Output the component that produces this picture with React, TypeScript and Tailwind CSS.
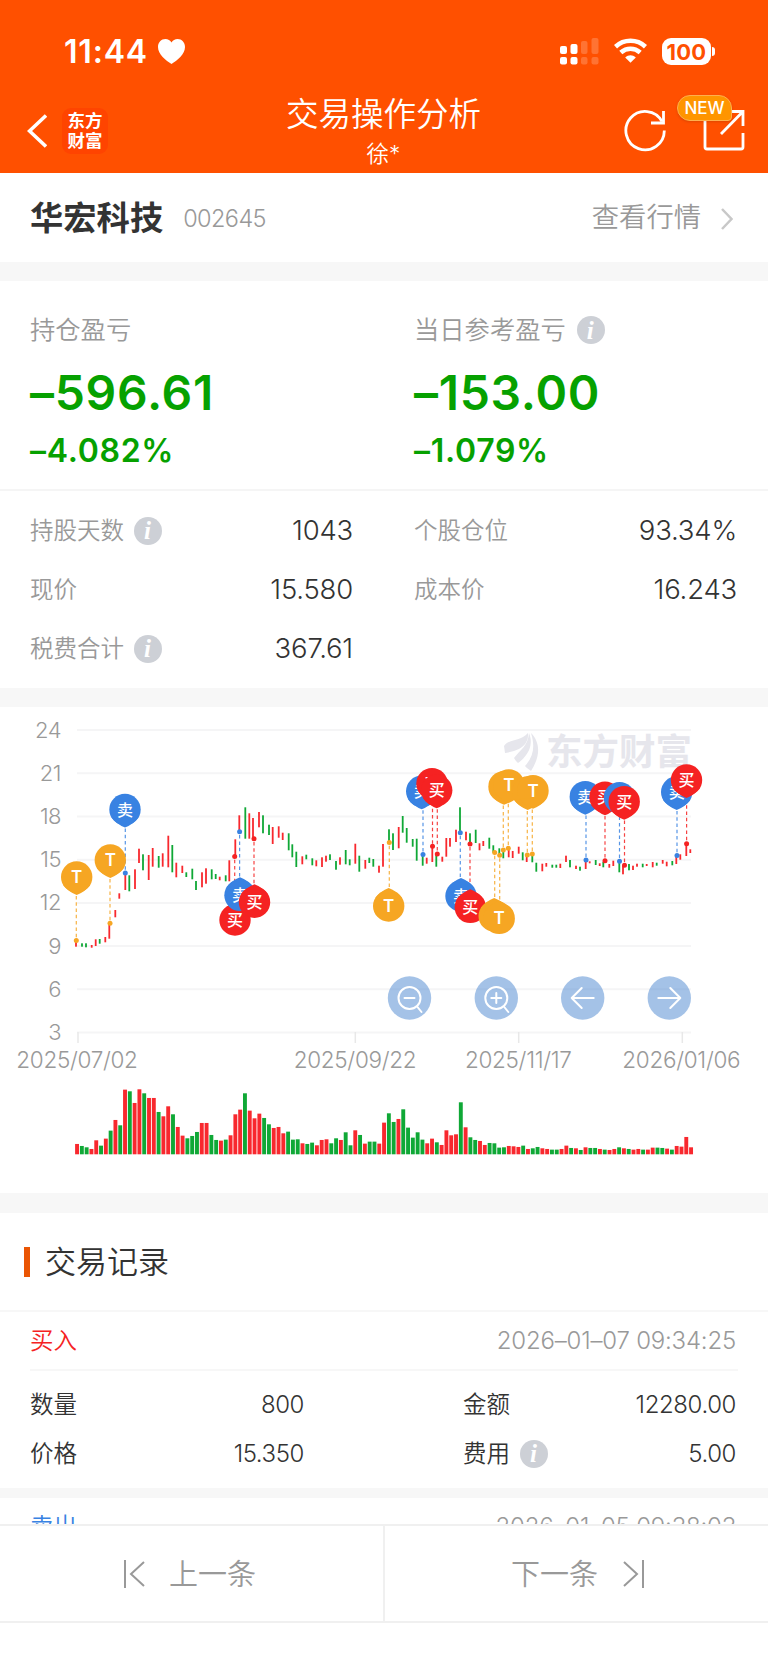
import type { ReactNode } from 'react'

type Candle = [string, number, number, number]

// [color, x, high, low]
const CANDLES: Candle[] = [
  ['r', 76, 941.7, 946.7], ['g', 82, 943.3, 946.7], ['g', 86, 943.3, 947.3], ['r', 91.7, 945, 947.7], ['r', 95.7, 939.3, 946],
  ['g', 99.7, 939, 943.7], ['r', 105.3, 937, 942.3], ['r', 109.3, 923.3, 938.7], ['r', 115.3, 910, 917.3], ['r', 119.3, 893.3, 898.7],
  ['r', 125.3, 873.3, 890], ['g', 129.3, 875.3, 891.3], ['r', 135, 869.3, 889], ['r', 139, 848.7, 863], ['g', 143, 854.3, 870.3],
  ['r', 148.7, 855, 880], ['r', 152.7, 848, 866.7], ['g', 158.7, 856, 867.7], ['r', 162.7, 853.3, 866.7], ['r', 168.3, 835.7, 867.3],
  ['g', 172.3, 845, 872.3], ['r', 176.3, 862.7, 877.3], ['r', 182.3, 865.7, 873], ['g', 186.3, 872.3, 877], ['g', 192.3, 868.7, 879.3],
  ['g', 196, 881, 890], ['r', 202, 872.3, 887.3], ['r', 206, 868.3, 883.7], ['g', 211.7, 869.3, 879.3], ['g', 215.7, 874, 879],
  ['r', 219.7, 876.7, 880.3], ['g', 225.7, 875.3, 881.3], ['r', 229.3, 860.3, 881.3], ['r', 235.3, 839.3, 856.7], ['r', 239.3, 815.3, 831.7],
  ['g', 245.3, 807.3, 838.7], ['r', 249.3, 813.3, 838.7], ['r', 253, 818, 838.7], ['r', 259, 812, 827.3], ['g', 263, 815.3, 833.3],
  ['g', 269, 824.7, 835], ['r', 272.7, 827, 844], ['r', 278.7, 826.3, 837.7], ['r', 282.7, 832.7, 840], ['g', 288.7, 833.3, 850.3],
  ['g', 292.3, 844.3, 857.3], ['g', 296.3, 851.7, 867], ['r', 302.3, 856.3, 864.3], ['g', 306.3, 854.7, 859.3], ['g', 312.3, 858.3, 865.3],
  ['r', 316.3, 860.3, 866.3], ['r', 322, 857.3, 867], ['r', 326, 855.7, 861.7], ['g', 330, 854.3, 860], ['g', 336, 861, 869.7],
  ['r', 340, 857.3, 864.7], ['g', 345.7, 850, 864.3], ['g', 349.7, 859.3, 865.3], ['r', 355.3, 843.7, 863.7], ['g', 359.3, 855.7, 871.7],
  ['r', 365.3, 860, 868.7], ['g', 369.3, 857.7, 863], ['g', 373.3, 859, 866.7], ['r', 379, 865.7, 872.7], ['r', 383, 844, 866.7],
  ['g', 389, 829.3, 842.7], ['g', 393, 833.3, 850], ['r', 398.7, 827, 848.3], ['g', 402.7, 816, 832.7], ['g', 406.7, 828, 842.7],
  ['g', 412.7, 839, 846.7], ['g', 416.7, 838.7, 860.7], ['g', 422.7, 854.7, 865.7], ['r', 426.7, 857.7, 863.7], ['r', 432.3, 846.3, 862],
  ['g', 436.3, 854, 866.7], ['r', 442.3, 856.7, 861.7], ['r', 446.3, 838, 856.7], ['r', 450, 838, 846.7], ['r', 456, 829.7, 842],
  ['g', 460, 807.3, 832.7], ['r', 466, 831.7, 840.3], ['g', 470, 833.3, 844], ['g', 475.7, 829.7, 843], ['r', 479.5, 843.3, 850.3],
  ['r', 483.3, 841, 846], ['g', 489.3, 837.7, 848.7], ['g', 493.3, 845.3, 852.7], ['g', 499.3, 848.3, 855], ['g', 503.3, 850, 858.3],
  ['r', 508.7, 848.3, 857.3], ['r', 512.7, 851, 858], ['r', 518.7, 846.7, 853.7], ['g', 522.7, 852.3, 860.3], ['r', 526.7, 855, 862],
  ['g', 532.3, 854.3, 862.3], ['g', 536.3, 862.7, 871.7], ['r', 542.3, 863.7, 871.3], ['r', 546.3, 863, 866.7], ['g', 552.3, 864.7, 867.7],
  ['g', 556.3, 864.7, 867.7], ['r', 560.3, 863.7, 868], ['r', 566, 855.7, 862], ['g', 570, 860, 867.3], ['r', 576, 865.7, 869],
  ['g', 580, 866.7, 870.7], ['r', 585.7, 860, 869], ['r', 589.7, 861.3, 863.3], ['g', 595.7, 860, 865], ['r', 599.7, 863.3, 866],
  ['g', 603.3, 861.7, 867.3], ['r', 609.3, 864, 867.7], ['r', 613.3, 860.7, 866], ['g', 619.3, 861, 872.3], ['r', 623, 866, 874.3],
  ['g', 629, 864, 870.3], ['r', 633, 865.7, 870], ['r', 637, 863.7, 866.7], ['g', 642.7, 863.7, 867.3], ['r', 646.7, 864, 866],
  ['r', 652.7, 862, 867.3], ['g', 656.7, 862.7, 865.7], ['r', 662.7, 860, 863.7], ['r', 666.7, 861.7, 866.3], ['g', 672.3, 861, 865.3],
  ['r', 676.3, 855.7, 864], ['r', 680.3, 854.3, 859.7], ['r', 686.3, 843.7, 856], ['r', 690.3, 849.3, 853],
]

// color + height in thirds of a pixel
const VOLUMES =
  'r31 g25 g21 r16 r42 g26 r47 g71 r103 g87 r194 g189 r154 r195 g183 r169 r169 g127 r114 r144 g120 r82 r56 g48 g55 g67 r94 r94 g58 g43 ' +
  'r41 g44 r57 r120 r134 g183 r131 r108 r122 g109 g90 r79 r82 r63 g68 g44 g45 r33 g31 g35 r27 r43 r45 g33 g48 r43 g66 g27 r72 g58 ' +
  'r32 g38 g38 r32 r95 g123 g97 r106 g135 g80 g50 g66 g44 r33 r47 g36 r28 r72 r57 r60 g156 r81 g51 g43 r40 r28 g34 g33 g20 g21 ' +
  'r25 r24 r22 g26 r16 g18 g22 r18 r16 g14 g14 r16 r26 g19 r18 g13 r21 g19 g19 r16 g14 r13 r16 g21 r18 g16 r14 r16 g14 r14 ' +
  'r20 g20 g19 r17 g14 r25 r23 r52 r21'

const PIN_COLOR: Record<string, string> = { T: '#f6a623', 卖: '#3882e2', 买: '#f52222' }

// [label, pin x, pin y, dot x, dot y]
const PINS: [string, number, number, number, number][] = [
  ['T', 76.7, 877, 76.3, 940.5],
  ['T', 110.3, 860, 110, 923.3],
  ['卖', 125, 809.5, 125.3, 873],
  ['买', 235, 920, 234.7, 856.6],
  ['卖', 240, 895.3, 239.6, 831.7],
  ['买', 254.5, 902.2, 254, 838.7],
  ['T', 388.7, 906, 389.3, 842.6],
  ['卖', 421.7, 791.3, 423, 854.6],
  ['买', 432, 783.6, 432.5, 846.3],
  ['买', 436.7, 790.3, 437.3, 854],
  ['卖', 461, 896, 460.3, 832.7],
  ['买', 470.3, 907.3, 470, 844],
  ['T', 494.2, 916, 494.7, 852.6],
  ['T', 499.2, 918.4, 499.7, 855.3],
  ['T', 504, 786.7, 503.3, 850],
  ['T', 508.8, 784.9, 508.3, 848.3],
  ['T', 527.7, 792, 527.3, 855],
  ['T', 533, 790.7, 532.3, 854],
  ['卖', 585.3, 796.7, 586, 860],
  ['买', 605, 797.2, 605, 860.7],
  ['卖', 619.5, 797.7, 619.5, 861.3],
  ['买', 624.2, 801.7, 624.5, 865.3],
  ['卖', 676.7, 792, 677, 855.6],
  ['买', 686.5, 780, 686.6, 843.7],
]

const AXIS = [24, 21, 18, 15, 12, 9, 6, 3]
const DATES: [string, number, number][] = [
  ['2025/07/02', 78, 77],
  ['2025/09/22', 355.3, 355],
  ['2025/11/17', 518.7, 518.3],
  ['2026/01/06', 682.3, 681.3],
]

const tone = (c: string) => (c === 'r' ? '#f8282e' : '#0fa836')

function Info() {
  return (
    <span className="flex h-7 w-7 items-center justify-center rounded-full bg-[#cdd0d6] pr-px font-['Liberation_Serif',serif] text-[25px] leading-none font-bold text-white italic">
      i
    </span>
  )
}

function Pin({ label, x, y, up }: { label: string; x: number; y: number; up: boolean }) {
  const s = up ? -1 : 1
  return (
    <g fill={PIN_COLOR[label]}>
      <circle cx={x} cy={y} r="15.7" />
      <path d={`M${x - 13.7} ${y + s * 7.7}Q${x - 8} ${y + s * 15} ${x} ${y + s * 18}Q${x + 8} ${y + s * 15} ${x + 13.7} ${y + s * 7.7}z`} />
      <text
        x={x}
        y={y + 6}
        fill="#fff"
        textAnchor="middle"
        fontSize={label === 'T' ? 17 : 16}
        fontWeight={label === 'T' ? 600 : 500}
      >
        {label}
      </text>
    </g>
  )
}

function RoundButton({ x, children }: { x: number; children: ReactNode }) {
  return (
    <g transform={`translate(${x} 998)`} fill="none" stroke="#fff" strokeWidth="2" strokeLinecap="round" strokeLinejoin="round">
      <circle r="21.7" fill="#4a86cf" fillOpacity="0.5" stroke="none" />
      {children}
    </g>
  )
}

function Chart() {
  return (
    <svg viewBox="0 707 768 486" className="block h-[486px] w-full">
      {AXIS.map((v, i) => (
        <g key={v}>
          <path d={`M77 ${730 + i * 43.22}H691`} stroke="#f5f5f6" strokeWidth="2" />
          <text x="61" y={737.5 + i * 43.22} textAnchor="end" fontSize="22" letterSpacing="-0.5" fill="#999">
            {v}
          </text>
        </g>
      ))}
      {DATES.map(([d, tick, x]) => (
        <g key={d}>
          <path d={`M${tick} 1032V1043`} stroke="#e8e8e8" strokeWidth="1.5" />
          <text x={x} y="1068" textAnchor="middle" fontSize="22.5" letterSpacing="-0.3" fill="#999">
            {d}
          </text>
        </g>
      ))}

      <g fill="#e6e6ec">
        <path d="M504 746C508 739 520 742 528 733C529 744 521 749 514 751C510 752 506 753 505 753Z" />
        <path d="M514 758C520 750 528 746 529 733C534 745 528 756 518 763C516 761 515 760 514 758Z" />
        <path d="M531 733C541 743 540 757 531 771C529 769 526 768 525 766C534 756 535 746 531 733Z" />
        <text x="546" y="765" fontSize="36.5" fontWeight="700">
          东方财富
        </text>
      </g>

      {CANDLES.map(([c, x, high, low]) => (
        <rect key={x} x={x - 0.9} y={high} width="1.8" height={low - high} fill={tone(c)} />
      ))}
      {VOLUMES.split(' ').map((v, i) => {
        const h = Number(v.slice(1)) / 3
        return <rect key={i} x={75.1 + i * 4.797} y={1154.3 - h} width="3.9" height={h} fill={tone(v[0])} />
      })}

      {PINS.map(([label, x, y, dx, dy], i) => (
        <g key={i}>
          <path d={`M${dx} ${y}V${dy}`} stroke={PIN_COLOR[label]} strokeWidth="1.2" strokeDasharray="3.5 2.8" strokeOpacity="0.85" />
          <circle cx={dx} cy={dy} r="2.5" fill={PIN_COLOR[label]} />
        </g>
      ))}
      {PINS.map(([label, x, y, , dy], i) => (
        <Pin key={i} label={label} x={x} y={y} up={y > dy} />
      ))}

      <RoundButton x={409.5}>
        <circle r="11" />
        <path d="M-5 0H5M8 9L12 14" />
      </RoundButton>
      <RoundButton x={496.3}>
        <circle r="11" />
        <path d="M-5 0H5M0 -5V5M8 9L12 14" />
      </RoundButton>
      <RoundButton x={582.7}>
        <path d="M11 0H-11M-1 -10L-11 0L-1 10" />
      </RoundButton>
      <RoundButton x={669.3}>
        <path d="M-11 0H11M1 -10L11 0L1 10" />
      </RoundButton>
    </svg>
  )
}

function StatusBar() {
  return (
    <div className="flex h-[80px] items-end pr-[53px] pl-[64px]">
      <span className="mb-[8px] w-[84px] text-[32px] leading-[40px] font-semibold tracking-[0.8px]">11:44</span>
      <svg viewBox="0 0 27 25" className="mb-[16px] ml-[10px] h-[25px] w-[27px]" fill="#fff">
        <path d="M13.5 25C8 21.5 0 15.500 0 8C0 3.500 3.300 0 7.400 0C10 0 12.300 1.500 13.500 3.500C14.700 1.500 17 0 19.600 0C23.700 0 27 3.500 27 8C27 15.500 19 21.500 13.500 25Z" />
      </svg>
      <div className="mb-[15px] ml-auto flex items-end gap-[15px]">
        <svg viewBox="0 0 39 28" className="h-[28px] w-[39px]" fill="#fff">
          <rect x="0" y="9" width="7" height="8" rx="2" />
          <rect x="10.500" y="7" width="7" height="10" rx="2" />
          <rect x="21" y="4" width="6.500" height="13" rx="2" opacity="0.2" />
          <rect x="31.500" y="1" width="7" height="16" rx="2" opacity="0.2" />
          <rect x="0" y="20" width="7" height="7.500" rx="2" />
          <rect x="10.500" y="20" width="7" height="7.500" rx="2" />
          <rect x="21" y="20" width="6.500" height="7.500" rx="2" opacity="0.2" />
          <rect x="31.500" y="20" width="7" height="7.500" rx="2" opacity="0.2" />
        </svg>
        <svg viewBox="0 0 33 25" className="mb-[2px] h-[25px] w-[33px]" fill="none" stroke="#fff" strokeWidth="4.600">
          <path d="M1.500 8.700C10 .8 23 .8 31.500 8.700" />
          <path d="M6.800 14.500C12.500 9.500 20.500 9.500 26.200 14.500" />
          <path d="M11.200 19.500C14.500 16.500 18.500 16.500 21.800 19.500L16.500 24.800Z" fill="#fff" stroke="none" />
        </svg>
        <div className="flex items-center gap-[1px]">
          <span className="flex h-[27px] w-[49px] items-center justify-center rounded-[9px] bg-white text-[22px] leading-none font-bold tracking-[0.2px] text-[#ff5000]">
            100
          </span>
          <span className="h-[9px] w-[3px] rounded-r-full bg-white" />
        </div>
      </div>
    </div>
  )
}

function NavBar() {
  return (
    <div className="grid h-[93px] grid-cols-[1fr_auto_1fr] pr-[23px] pl-[27px]">
      <div className="flex items-center pt-[8px]">
        <svg viewBox="0 0 20 34" className="h-[34px] w-[20px]" fill="none" stroke="#fff" strokeWidth="3.600">
          <path d="M19 1.500L2.500 17L19 32.500" />
        </svg>
        <span className="ml-[15px] flex h-[46px] w-[46px] flex-col items-center justify-center rounded-[9px] bg-[#ff4400] text-[17.500px] leading-[19.500px] font-bold">
          <span>东方</span>
          <span>财富</span>
        </span>
      </div>
      <div className="pr-[5px] text-center">
        <h1 className="pt-[15px] text-[32.500px] leading-[40px]">交易操作分析</h1>
        <p className="text-[22.500px] leading-[38px]">徐*</p>
      </div>
      <div className="flex items-start justify-end gap-[36px] pt-[28px]">
        <svg viewBox="0 0 44 44" className="h-[44px] w-[44px]" fill="none" stroke="#fff" strokeWidth="2.800">
          <path d="M41.300 22.500A19.200 19.200 0 1 1 39 13.500" />
          <path d="M40.500 3V15H28" />
        </svg>
        <div className="relative">
          <svg viewBox="0 0 42 44" className="h-[44px] w-[42px]" fill="none" stroke="#fff" strokeWidth="2.800">
            <path d="M2 6V39Q2 41 4 41H38Q40 41 40 39V25" />
            <path d="M26 3.500H40V18M40 3.500L18 26" />
          </svg>
          <span className="absolute -top-[13px] -left-[26px] flex h-[26px] w-[55px] items-center justify-center rounded-[13px] rounded-br-[4px] border border-[#ffb04d] bg-[#ff9500] text-[17px] leading-none font-medium shadow-sm">
            NEW
          </span>
        </div>
      </div>
    </div>
  )
}

function Stat({ label, value, info }: { label: string; value: string; info?: boolean }) {
  return (
    <div className="flex h-[59px] items-center">
      <span className="mr-[10px] text-[23.500px] text-[#999]">{label}</span>
      {info && <Info />}
      <span className="mt-px ml-auto text-[27.500px] tracking-[-0.2px] text-[#333]">{value}</span>
    </div>
  )
}

function Profit({ label, value, rate, info }: { label: string; value: string; rate: string; info?: boolean }) {
  return (
    <div className="text-[#06a100]">
      <div className="flex h-[38px] items-center gap-[11px] text-[25.300px] text-[#999]">
        {label}
        {info && <Info />}
      </div>
      <div className="mt-[14px] text-[48px] leading-[60px] font-semibold tracking-[0.7px]">{value}</div>
      <div className="mt-[8px] text-[32px] leading-[40px] font-semibold tracking-[0.7px]">{rate}</div>
    </div>
  )
}

function Field({ label, value, info }: { label: string; value: string; info?: boolean }) {
  return (
    <div className="flex h-[49px] items-center text-[#333]">
      <span className="mr-[10px] text-[23.500px]">{label}</span>
      {info && <Info />}
      <span className="mt-px ml-auto text-[24px] tracking-[-0.4px]">{value}</span>
    </div>
  )
}

export default function App() {
  return (
    <div className="flex h-[1663px] w-[768px] flex-col overflow-hidden bg-white font-['Inter','Noto_Sans_CJK_SC',sans-serif] font-[350] whitespace-nowrap">
      <header className="h-[173px] shrink-0 bg-[#ff5000] text-white">
        <StatusBar />
        <NavBar />
      </header>

      <div className="flex h-[89px] shrink-0 items-center px-[30px] pt-[2px]">
        <h2 className="text-[33.300px] font-bold text-[#333]">华宏科技</h2>
        <span className="ml-[20px] text-[23.500px] tracking-[-0.6px] text-[#999]">002645</span>
        <span className="ml-auto text-[27.300px] text-[#999]">查看行情</span>
        <svg viewBox="0 0 12 22" className="mr-[5px] ml-[20px] h-[22px] w-[12px]" fill="none" stroke="#c8c8c8" strokeWidth="2.500">
          <path d="M1 1L10.500 11L1 21" />
        </svg>
      </div>

      <div className="h-[19px] shrink-0 bg-[#f7f7f7]" />

      <section className="shrink-0">
        <div className="grid h-[210px] grid-cols-2 border-b-2 border-[#f5f5f5] pt-[30px] pl-[30px]">
          <Profit label="持仓盈亏" value="–596.61" rate="–4.082%" />
          <div className="pl-[15px]">
            <Profit label="当日参考盈亏" value="–153.00" rate="–1.079%" info />
          </div>
        </div>
        <div className="grid h-[197px] grid-cols-[323px_323px] content-start gap-x-[61px] pt-[10px] pl-[30px]">
          <Stat label="持股天数" value="1043" info />
          <Stat label="个股仓位" value="93.34%" />
          <Stat label="现价" value="15.580" />
          <Stat label="成本价" value="16.243" />
          <Stat label="税费合计" value="367.61" info />
        </div>
      </section>

      <div className="h-[19px] shrink-0 bg-[#f7f7f7]" />

      <section className="h-[486px] shrink-0">
        <Chart />
      </section>

      <div className="h-[20px] shrink-0 bg-[#f7f7f7]" />

      <section className="h-[311px] shrink-0 overflow-hidden">
        <div className="flex h-[99px] items-center border-b-2 border-[#f7f7f7] pl-[24px]">
          <span className="h-[30px] w-[6px] bg-[#ea5504]" />
          <h3 className="mt-[2px] ml-[15px] text-[31px] text-[#333]">交易记录</h3>
        </div>
        <div className="pr-[30px] pl-[30px]">
          <div className="flex h-[59px] items-center justify-between border-b-2 border-[#f7f7f7] pr-[2px]">
            <span className="text-[23.500px] text-[#f52222]">买入</span>
            <span className="text-[24px] tracking-[-0.2px] text-[#999]">2026–01–07 09:34:25</span>
          </div>
          <div className="grid h-[117px] grid-cols-[274px_273px] content-start gap-x-[159px] pt-[9px]">
            <Field label="数量" value="800" />
            <Field label="金额" value="12280.00" />
            <Field label="价格" value="15.350" />
            <Field label="费用" value="5.00" info />
          </div>
        </div>
        <div className="h-[10px] bg-[#f7f7f7]" />
        <div className="flex h-[57px] items-center justify-between pr-[32px] pl-[30px]">
          <span className="text-[23.500px] text-[#3882e2]">卖出</span>
          <span className="text-[24px] tracking-[-0.2px] text-[#999]">2026–01–05 09:38:03</span>
        </div>
      </section>

      <footer className="relative grid h-[99px] shrink-0 grid-cols-[385px_1fr] border-y-2 border-[#f0f0f0] bg-white text-[29px] text-[#999]">
        <div className="flex items-center border-r-2 border-[#f0f0f0] pl-[123px]">
          <svg viewBox="0 0 22 28" className="mr-[24px] h-[28px] w-[22px]" fill="none" stroke="#999" strokeWidth="2">
            <path d="M2 0V28M21 2L8 14L21 26" />
          </svg>
          <span className="mt-[2px]">上一条</span>
        </div>
        <div className="flex items-center pl-[126px]">
          <span className="mt-[2px]">下一条</span>
          <svg viewBox="0 0 22 28" className="ml-[25px] h-[28px] w-[22px]" fill="none" stroke="#999" strokeWidth="2">
            <path d="M20 0V28M1 2L14 14L1 26" />
          </svg>
        </div>
      </footer>
    </div>
  )
}
